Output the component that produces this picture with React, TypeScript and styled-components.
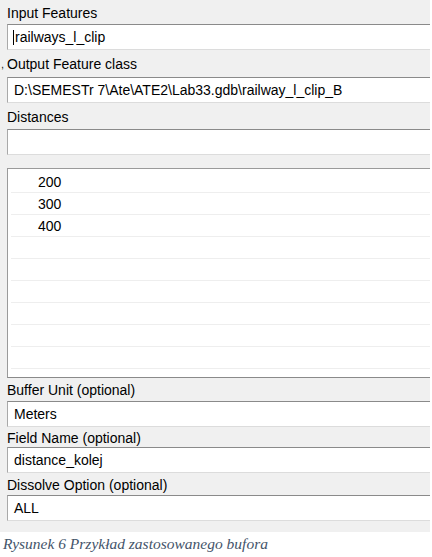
import React from 'react';
import styled, {createGlobalStyle} from 'styled-components';

const GlobalStyle = createGlobalStyle`
  html, body {
    margin: 0;
    padding: 0;
    background: #ffffff;
  }
  body {
    font-family: "Liberation Sans", Arial, sans-serif;
  }
`;

const distances = ['200', '300', '400'];
const emptyRows = 6;

const App = () => {
    return (
        <>
            <GlobalStyle/>
            <Root>
                <Panel>
                    <Label h={24}>Input Features</Label>
                    <Input>
                        <Caret/>railways_l_clip
                    </Input>
                    <Label h={27}>
                        <Tick>,</Tick>Output Feature class
                    </Label>
                    <Input>D:\SEMESTr 7\Ate\ATE2\Lab33.gdb\railway_l_clip_B</Input>
                    <Label h={26}>Distances</Label>
                    <Input/>
                    <List>
                        {distances.map(d => (
                            <Row key={d}>{d}</Row>
                        ))}
                        {Array.from({length: emptyRows}).map((_, i) => (
                            <Row key={'e' + i}/>
                        ))}
                    </List>
                    <Label h={23}>Buffer Unit (optional)</Label>
                    <Input>Meters</Input>
                    <Label h={20}>Field Name (optional)</Label>
                    <Input>distance_kolej</Input>
                    <Label h={22}>Dissolve Option (optional)</Label>
                    <Input>ALL</Input>
                </Panel>
                <Caption>Rysunek 6 Przykład zastosowanego bufora</Caption>
            </Root>
        </>
    );
};

export default App;

const Root = styled.div`
  width: 432px;
  height: 557px;
  overflow: hidden;
`;

const Panel = styled.div`
  width: 423px;
  height: 532px;
  padding-left: 7px;
  background: #f0f0f0;
  box-sizing: content-box;
  display: flex;
  flex-direction: column;
  overflow: hidden;
`;

type LabelProps = {
    h: number;
}

const Label = styled.div<LabelProps>`
  height: ${props => props.h}px;
  display: flex;
  align-items: center;
  padding-top: 1px;
  box-sizing: border-box;
  font-size: 14px;
  color: #000;
  white-space: nowrap;
`;

const Tick = styled.span`
  margin-left: -6px;
  width: 6px;
  font-size: 11px;
  color: #222;
`;

const Input = styled.div`
  height: 26px;
  flex-shrink: 0;
  box-sizing: border-box;
  background: #ffffff;
  border-top: 1px solid #8a8a8a;
  border-left: 1px solid #a9a9a9;
  border-bottom: 1px solid #dcdcdc;
  padding-left: 6px;
  display: flex;
  align-items: center;
  font-size: 14px;
  color: #000;
  white-space: nowrap;
`;

const Caret = styled.span`
  width: 1px;
  height: 15px;
  background: #000;
  margin-right: 1px;
  margin-left: -1px;
`;

const List = styled.div`
  margin-top: 13px;
  height: 210px;
  flex-shrink: 0;
  box-sizing: border-box;
  background: #ffffff;
  border-top: 1px solid #9a9a9a;
  border-left: 1px solid #9a9a9a;
  border-bottom: 1px solid #8a8a8a;
  padding: 2px 0 0 3px;
  display: flex;
  flex-direction: column;
  overflow: hidden;
`;

const Row = styled.div`
  height: 22px;
  flex-shrink: 0;
  box-sizing: border-box;
  border-bottom: 1px solid #eeeeee;
  padding-left: 27px;
  display: flex;
  align-items: center;
  font-size: 14px;
  color: #000;
`;

const Caption = styled.div`
  padding: 3px 0 0 3px;
  font-family: "Liberation Serif", "Times New Roman", serif;
  font-style: italic;
  font-size: 15.5px;
  color: #44546a;
`;
